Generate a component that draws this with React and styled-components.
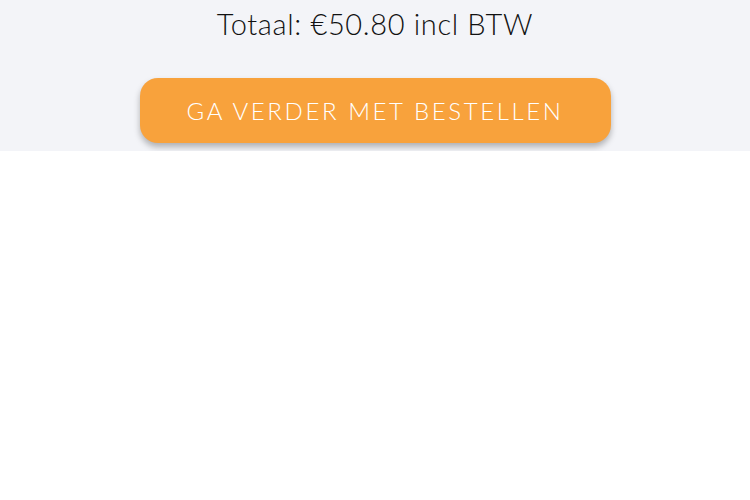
import React from 'react'
import styled, { createGlobalStyle } from 'styled-components'

const GlobalStyle = createGlobalStyle`
  body {
    margin: 0;
    background: #fff;
    font-family: 'Lato', 'Noto Sans', sans-serif;
  }
`

const Footer = styled.div`
  background: #f3f4f8;
  display: flex;
  flex-direction: column;
  align-items: center;
  padding-top: 4px;
  padding-bottom: 8px;
`

const Total = styled.div`
  font-size: 29px;
  font-weight: 300;
  color: #111;
  line-height: 40px;
  letter-spacing: 0.65px;
`

const OrderButton = styled.button`
  margin-top: 34px;
  width: 471px;
  height: 65px;
  border: none;
  border-radius: 18px;
  background: #f8a23c;
  color: #fff;
  font-family: 'Lato', 'Noto Sans', sans-serif;
  font-size: 24px;
  font-weight: 300;
  letter-spacing: 2.6px;
  text-transform: uppercase;
  box-shadow: 0 4px 6px rgba(0, 0, 0, 0.28);
  cursor: pointer;
`

const App = () => (
  <>
    <GlobalStyle />
    <Footer>
      <Total>Totaal: €50.80 incl BTW</Total>
      <OrderButton>Ga verder met bestellen</OrderButton>
    </Footer>
  </>
)

export default App
